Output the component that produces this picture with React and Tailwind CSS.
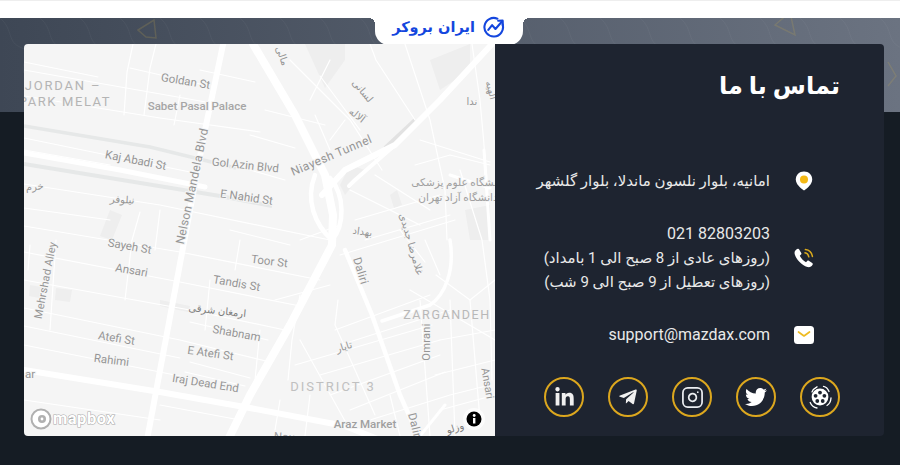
import { FaLinkedinIn, FaTelegramPlane, FaTwitter } from 'react-icons/fa';
import { Instagram } from 'lucide-react';

const MAP_FONT = 'Roboto, "DejaVu Sans", sans-serif';

const THIN_ROADS = [
  'M24 62 L98 77', 'M24 70 L240 108', 'M24 96 L160 118 L260 132', 'M24 138 L190 172', 'M24 150 L110 165',
  'M156 44 L150 68 L144 115', 'M133 44 L127 72 L124 115', 'M200 70 L255 82', 'M130 68 L200 84', 'M180 95 L174 125',
  'M24 184 L160 205 L330 240', 'M24 208 L110 220', 'M24 226 L180 252 L320 280', 'M24 252 L180 282 L300 306',
  'M24 280 L190 310 L285 330', 'M24 308 L180 340 L270 362', 'M24 326 L180 358', 'M24 345 L180 376', 'M190 322 L268 340',
  'M190 362 L250 378', 'M185 372 L245 386', 'M24 400 L160 420', 'M160 405 L240 420', 'M240 240 L235 270', 'M140 212 L132 240 L125 300',
  'M56 240 L50 330', 'M30 245 L28 270', 'M210 280 L205 330', 'M160 210 L155 250',
  'M290 60 L350 120 L382 170', 'M330 60 L310 100', 'M320 76 L360 130', 'M265 110 L325 125', 'M250 135 L295 148', 'M250 170 L285 180',
  'M345 120 L330 140', 'M315 115 L330 150', 'M370 44 L376 60 L415 120', 'M405 44 L430 120 L445 190 L447 240',
  'M420 140 L490 162', 'M415 165 L450 155 L490 165', 'M350 190 L420 225', 'M375 175 L430 210', 'M355 220 L440 195', 'M365 240 L450 215',
  'M340 255 L455 220', 'M300 240 L340 225', 'M460 170 L482 240 L490 300 L492 380', 'M472 44 L480 100 L488 190',
  'M335 330 L430 295', 'M340 345 L450 310', 'M295 365 L432 325', 'M320 375 L440 340', 'M330 395 L440 355', 'M350 410 L445 372',
  'M370 420 L450 395 L490 385', 'M300 340 L350 430', 'M338 300 L335 325 L375 415', 'M300 295 L292 340 L288 380', 'M260 330 L255 380',
  'M450 300 L455 436', 'M470 300 L480 420', 'M420 300 L430 436', 'M436 275 L470 300 L495 280', 'M410 290 L495 340',
  'M440 340 L495 330', 'M435 375 L495 360', 'M440 410 L495 395', 'M400 230 L425 262', 'M425 240 L440 275', 'M280 400 L275 430', 'M310 395 L305 436',
  'M230 230 L290 245', 'M275 300 L330 285', 'M390 395 L400 436',
];

const PATCHES = [
  'M305 44 L345 44 L345 60 L325 88 Z', 'M110 210 L122 215 L112 240 L100 236 Z', 'M160 300 L190 306 L188 312 L160 306 Z',
  'M56 288 L72 290 L70 302 L55 300 Z', 'M30 285 L42 287 L40 298 L29 296 Z', 'M345 195 L365 170 L350 165 L340 185 Z',
  'M440 90 L470 70 L470 44 L430 60 Z', 'M465 210 L490 205 L490 240 L470 240 Z', 'M390 195 L397 190 L402 205 L394 208 Z',
];

// text, center x, center y, rotation, size, colour, letter spacing, weight
const LABELS = [
  ['JORDAN –', 63, 90, 0, 13, '#b4b4b4', 1.8, 400],
  ['PARK MELAT', 65, 106, 0, 13, '#b4b4b4', 1.6, 400],
  ['Goldan St', 185, 85, 9, 11.5, '#959595', 0, 400],
  ['Sabet Pasal Palace', 197, 110, 0, 11.5, '#a6a6a6', 0, 500],
  ['Nelson Mandela Blvd', 196, 187, -78, 12, '#959595', 0.3, 400],
  ['Kaj Abadi St', 135, 164, 11, 11.5, '#959595', 0, 400],
  ['Gol Azin Blvd', 245, 169, 6, 11.5, '#959595', 0, 400],
  ['E Nahid St', 246, 201, 8, 11.5, '#959595', 0, 400],
  ['خرم', 35, 190, -5, 10, '#959595', 0, 400],
  ['نیلوفر', 122, 203, 3, 10, '#959595', 0, 400],
  ['Sayeh St', 129, 250, 10, 11.5, '#959595', 0, 400],
  ['Ansari', 131, 274, 10, 11.5, '#959595', 0, 400],
  ['Tandis St', 236, 287, 10, 11.5, '#959595', 0, 400],
  ['Toor St', 269, 265, 7, 11.5, '#959595', 0, 400],
  ['ارمغان شرقی', 217, 314, 6, 10, '#7d7d7d', 0, 400],
  ['Shabnam', 236, 337, 10, 11.5, '#959595', 0, 400],
  ['Atefi St', 116, 342, 9, 11.5, '#959595', 0, 400],
  ['E Atefi St', 210, 357, 8, 11.5, '#959595', 0, 400],
  ['Rahimi', 111, 364, 7, 11.5, '#959595', 0, 400],
  ['ar', 30, 378, 0, 11.5, '#959595', 0, 400],
  ['Iraj Dead End', 205, 387, 9, 11.5, '#959595', 0, 400],
  ['Mehrshad Alley', 49, 281, -79, 11, '#959595', 0.2, 400],
  ['DISTRICT 3', 333, 391, 0, 13, '#c0c0c0', 2, 400],
  ['Araz Market', 365, 428, 0, 11.5, '#9f9f9f', 0, 500],
  ['Daliri', 357, 272, 73, 11.5, '#959595', 0.3, 400],
  ['Dalir', 411, 426, 76, 11.5, '#959595', 0.3, 400],
  ['Omrani', 430, 342, -90, 11, '#959595', 0.3, 400],
  ['Ansari', 484, 384, 80, 11, '#959595', 0, 400],
  ['ZARGANDEH', 447, 319, 0, 12.5, '#b8b8b8', 1.6, 400],
  ['وزلو', 456, 431, -18, 10, '#7d7d7d', 0, 400],
  ['تایار', 345, 350, -18, 10, '#959595', 0, 400],
  ['غلامرضا جدیدی', 408, 245, 74, 10, '#959595', 0, 400],
  ['بهداد', 362, 235, 8, 10, '#959595', 0, 400],
  ['دانشگاه علوم پزشکی', 458, 186, 0, 10.5, '#a0a0a0', 0, 400],
  ['دانشگاه آزاد تهران', 458, 201, 0, 10.5, '#a0a0a0', 0, 400],
  ['ندا', 472, 105, 0, 10, '#959595', 0, 400],
  ['لسانی', 360, 93, 50, 10, '#959595', 0, 400],
  ['آلاله', 355, 118, 38, 10, '#959595', 0, 400],
  ['مالی', 279, 57, 70, 10, '#959595', 0, 400],
  ['الهیه', 488, 91, 75, 10, '#959595', 0, 400],
  ['Niayesh Tunnel', 333, 159, -23, 12, '#959595', 0.4, 400],
  ['Nou', 284, 441, 5, 11.5, '#a0a0a0', 0, 400],
];

const BAND_XS = Array.from({ length: 24 }, (_, i) => i * 40);

function MapDrawing() {
  return (
    <svg viewBox="24 44 471 392" className="block w-full h-full" style={{ fontFamily: MAP_FONT }}>
      <rect x="24" y="44" width="471" height="392" fill="#f5f5f5" />
      {PATCHES.map((d) => <path key={d} d={d} fill="#eeeeee" />)}
      <path d="M24 164 L220 196 L272 206" stroke="#e6e8e8" strokeWidth="4" fill="none" />
      <path d="M24 126 L150 147 L236 168" stroke="#e6e8e8" strokeWidth="3.5" fill="none" />
      <path d="M385 148 L415 120" stroke="#e2e2e2" strokeWidth="4" fill="none" />
      <g fill="none" stroke="#ffffff" strokeWidth="1.2" strokeLinecap="round">
        {THIN_ROADS.map((d) => <path key={d} d={d} />)}
      </g>
      <g fill="none" stroke="#ffffff" strokeLinecap="round" strokeLinejoin="round">
        <path d="M224 40 L205 130 L147 440" strokeWidth="6" />
        <path d="M24 153 L120 170 L205 187" strokeWidth="5" />
        <path d="M253 44 L295 115 L325 175 L333 215 L332 245 L290 325 L250 395 L228 440" strokeWidth="8" />
        <path d="M492 44 L440 100 L395 145 L345 170 L322 195" strokeWidth="6" />
        <path d="M395 145 L355 180 L349 186" strokeWidth="4" />
        <path d="M315 175 C305 200 315 225 332 240 C345 225 345 195 330 178" strokeWidth="4.5" />
        <path d="M24 370 L160 392 L250 408 L345 426 L380 440" strokeWidth="6" />
        <path d="M345 250 L372 315 L400 395 L420 440" strokeWidth="4.5" />
        <path d="M382 321 L430 305 C445 295 455 270 450 240" strokeWidth="3.5" />
        <path d="M420 436 L445 405" strokeWidth="3" />
        <path d="M450 175 L490 188" strokeWidth="3" />
        <path d="M484 150 L490 240" strokeWidth="3" />
      </g>
      {LABELS.map(([text, x, y, rot, size, fill, spacing, weight], i) => (
        <text
          key={i}
          x={x}
          y={y}
          fontSize={size}
          fill={fill}
          fontWeight={weight}
          letterSpacing={spacing}
          textAnchor="middle"
          transform={rot ? `rotate(${rot} ${x} ${y})` : undefined}
          stroke="#f5f5f5"
          strokeWidth="2"
          paintOrder="stroke"
        >
          {text}
        </text>
      ))}
      {/* mapbox mark */}
      <circle cx="41" cy="419" r="9.5" fill="#ffffff" stroke="#b0b0b0" strokeWidth="2" />
      <circle cx="42" cy="419" r="4" fill="#b0b0b0" />
      <circle cx="42" cy="419" r="1.4" fill="#ffffff" />
      <text x="53" y="424" fontSize="16.5" fontWeight="700" fill="#ffffff" stroke="#a8a8a8" strokeWidth="1.1" paintOrder="stroke" fontFamily="Roboto, sans-serif" letterSpacing="0.5">mapbox</text>
      {/* attribution button */}
      <circle cx="474" cy="419" r="11" fill="#ffffff" opacity="0.7" />
      <circle cx="474" cy="419" r="7.5" fill="#000000" />
      <rect x="473" y="418" width="2.4" height="5.5" fill="#ffffff" />
      <circle cx="474.2" cy="415.5" r="1.4" fill="#ffffff" />
    </svg>
  );
}

function LogoMark() {
  return (
    <svg width="23" height="23" viewBox="0 0 24 24" fill="none" stroke="#1446de" strokeWidth="2.2" strokeLinecap="round" strokeLinejoin="round">
      <path d="M20.5 9 A9.7 9.7 0 1 1 15 2.8" />
      <path d="M5.5 14.5 L9.5 9.5 L13 13.5 L20 5.5" />
      <path d="M15.8 5 L20.5 4.8 L20.7 9.5" />
    </svg>
  );
}

function PinIcon() {
  return (
    <svg width="18" height="20" viewBox="0 0 18 20">
      <path d="M9 0.5 C4.2 0.5 0.8 4 0.8 8.4 C0.8 13 5.5 17 9 19.5 C12.5 17 17.2 13 17.2 8.4 C17.2 4 13.8 0.5 9 0.5 Z" fill="#ffffff" />
      <circle cx="9" cy="8.4" r="4" fill="#f5b914" />
    </svg>
  );
}

function PhoneIcon() {
  return (
    <svg width="22" height="22" viewBox="0 0 22 22" fill="none">
      <path d="M4.8 1.8 C3.2 2.4 1.2 4 1.6 6.4 C2.4 11.6 8.6 18.4 14.4 20 C16.8 20.6 18.6 19.4 19.6 17.8 C20 17 19.8 16.4 19.2 16 L15.8 13.8 C15.2 13.4 14.6 13.6 14.2 14 L13 15.2 C10.6 14.2 7.8 11.2 6.8 8.8 L8 7.6 C8.4 7.2 8.6 6.6 8.2 6 L6.2 2.4 C5.8 1.8 5.4 1.6 4.8 1.8 Z" fill="#ffffff" />
      <path d="M12 5.8 C14 6.2 15.4 7.8 15.8 9.8" stroke="#d9a91c" strokeWidth="1.5" strokeLinecap="round" />
      <path d="M12.4 2.6 C16 3 18.8 5.8 19.4 9.4" stroke="#d9a91c" strokeWidth="1.5" strokeLinecap="round" />
    </svg>
  );
}

function MailIcon() {
  return (
    <svg width="20" height="18" viewBox="0 0 20 18" fill="none">
      <rect x="0" y="0" width="20" height="18" rx="3.5" fill="#ffffff" />
      <path d="M4.5 6 L10 10 L15.5 6" stroke="#eebb22" strokeWidth="1.7" strokeLinecap="round" strokeLinejoin="round" />
    </svg>
  );
}

function AparatIcon() {
  return (
    <svg width="26" height="26" viewBox="0 0 26 26" fill="none">
      <circle cx="13" cy="13" r="8.4" fill="#ffffff" />
      <circle cx="13" cy="8.6" r="1.9" fill="#1e2430" />
      <circle cx="17.4" cy="11.8" r="1.9" fill="#1e2430" />
      <circle cx="15.7" cy="17" r="1.9" fill="#1e2430" />
      <circle cx="10.3" cy="17" r="1.9" fill="#1e2430" />
      <circle cx="8.6" cy="11.8" r="1.9" fill="#1e2430" />
      <g stroke="#ffffff" strokeWidth="1.3" strokeLinecap="round">
        <path d="M5 8 C6 5.5 7.5 4 10 2.8" />
        <path d="M16.5 2.4 C19 3 21 5 22 7.5" />
        <path d="M24 14 C23.8 17 22.5 20 20 21.5" />
        <path d="M10 24 C7 23.5 4.5 21.5 3.2 18.5" />
      </g>
    </svg>
  );
}

const SOCIALS = [
  { key: 'aparat', icon: <AparatIcon /> },
  { key: 'twitter', icon: <FaTwitter className="w-[22px] h-[22px] text-white" /> },
  { key: 'instagram', icon: <Instagram className="w-[23px] h-[23px] text-[#eceef2]" strokeWidth={1.8} /> },
  { key: 'telegram', icon: <FaTelegramPlane className="w-[20px] h-[20px] text-[#f0f0f0]" /> },
  { key: 'linkedin', icon: <FaLinkedinIn className="w-[21px] h-[21px] text-[#f0f0f0]" /> },
];

function ContactRow({ icon, children }) {
  return (
    <div className="flex items-center" dir="rtl">
      <div className="w-[44px] flex justify-center shrink-0">{icon}</div>
      <div className="mr-[12px] text-[#e9e9e9] text-[15px] leading-[24px]">{children}</div>
    </div>
  );
}

export default function App() {
  return (
    <div className="relative w-[900px] h-[465px] overflow-hidden flex flex-col bg-[#151c24]" style={{ fontFamily: 'Roboto, "DejaVu Sans", sans-serif' }}>
      <div className="h-[18px] bg-white border-t border-[#eeeeee]" />

      <div className="relative h-[94px] bg-gradient-to-r from-[#3e4755] to-[#6b7381] overflow-hidden">
        <svg className="w-full h-full" viewBox="0 0 900 94" fill="none">
          <g stroke="#ffffff" strokeOpacity="0.04">
            {BAND_XS.map((x) => (
              <path key={x} d={`M${x} 0 C${x + 14} 12 ${x + 6} 24 ${x + 22} 30 C${x + 36} 36 ${x + 14} 48 ${x + 28} 60 C${x + 40} 70 ${x + 20} 82 ${x + 30} 94`} />
            ))}
          </g>
          <g stroke="#c9a94a" strokeOpacity="0.2" strokeWidth="1.5">
            <path d="M138 12 L154 2 L156 20 L146 19 Z" />
            <path d="M775 7 L790 -6 L795 17 Z" />
            <path d="M888 44 L896 58 L888 68" />
          </g>
        </svg>
      </div>

      {/* logo tab */}
      <div className="absolute top-[18px] left-[375px] w-[148px] h-[27px] bg-white rounded-b-[14px] flex items-center justify-center gap-[8px] pb-[8px]" dir="rtl">
        <LogoMark />
        <span className="text-[#1446de] text-[14.5px] font-bold leading-none" style={{ fontFamily: '"DejaVu Sans", sans-serif' }}>ایران بروکر</span>
      </div>
      <div className="absolute top-[18px] left-[369px] w-[6px] h-[6px] bg-[radial-gradient(circle_at_0_100%,transparent_6px,white_6px)]" />
      <div className="absolute top-[18px] left-[523px] w-[6px] h-[6px] bg-[radial-gradient(circle_at_100%_100%,transparent_6px,white_6px)]" />

      <div className="relative mt-[-68px] ml-[24px] mr-[16px] h-[392px] flex rounded-[4px] overflow-hidden">
        <div className="w-[471px] h-full shrink-0">
          <MapDrawing />
        </div>
        <div className="flex-1 bg-[#1e2430] flex flex-col pr-[44px] pl-[49px]">
          <h1 className="text-white text-[24px] font-bold leading-[36px] mt-[24px] text-right" dir="rtl">تماس با ما</h1>
          <div className="mt-[65px] mr-[14px] ml-[-49px]">
            <ContactRow icon={<PinIcon />}>امانیه، بلوار نلسون ماندلا، بلوار گلشهر</ContactRow>
            <div className="mt-[29px]">
              <ContactRow icon={<PhoneIcon />}>
                <div dir="ltr" className="text-right text-[16px]">021 82803203</div>
                <div>(روزهای عادی از 8 صبح الی 1 بامداد)</div>
                <div>(روزهای تعطیل از 9 صبح الی 9 شب)</div>
              </ContactRow>
            </div>
            <div className="mt-[29px]">
              <ContactRow icon={<MailIcon />}>
                <span dir="ltr" className="text-[16px]">support@mazdax.com</span>
              </ContactRow>
            </div>
          </div>
          <div className="mt-[30px] flex justify-between" dir="rtl">
            {SOCIALS.map((s) => (
              <div key={s.key} className="w-[40px] h-[40px] rounded-full border-2 border-[#dca71e] flex items-center justify-center">
                {s.icon}
              </div>
            ))}
          </div>
        </div>
      </div>
    </div>
  );
}
